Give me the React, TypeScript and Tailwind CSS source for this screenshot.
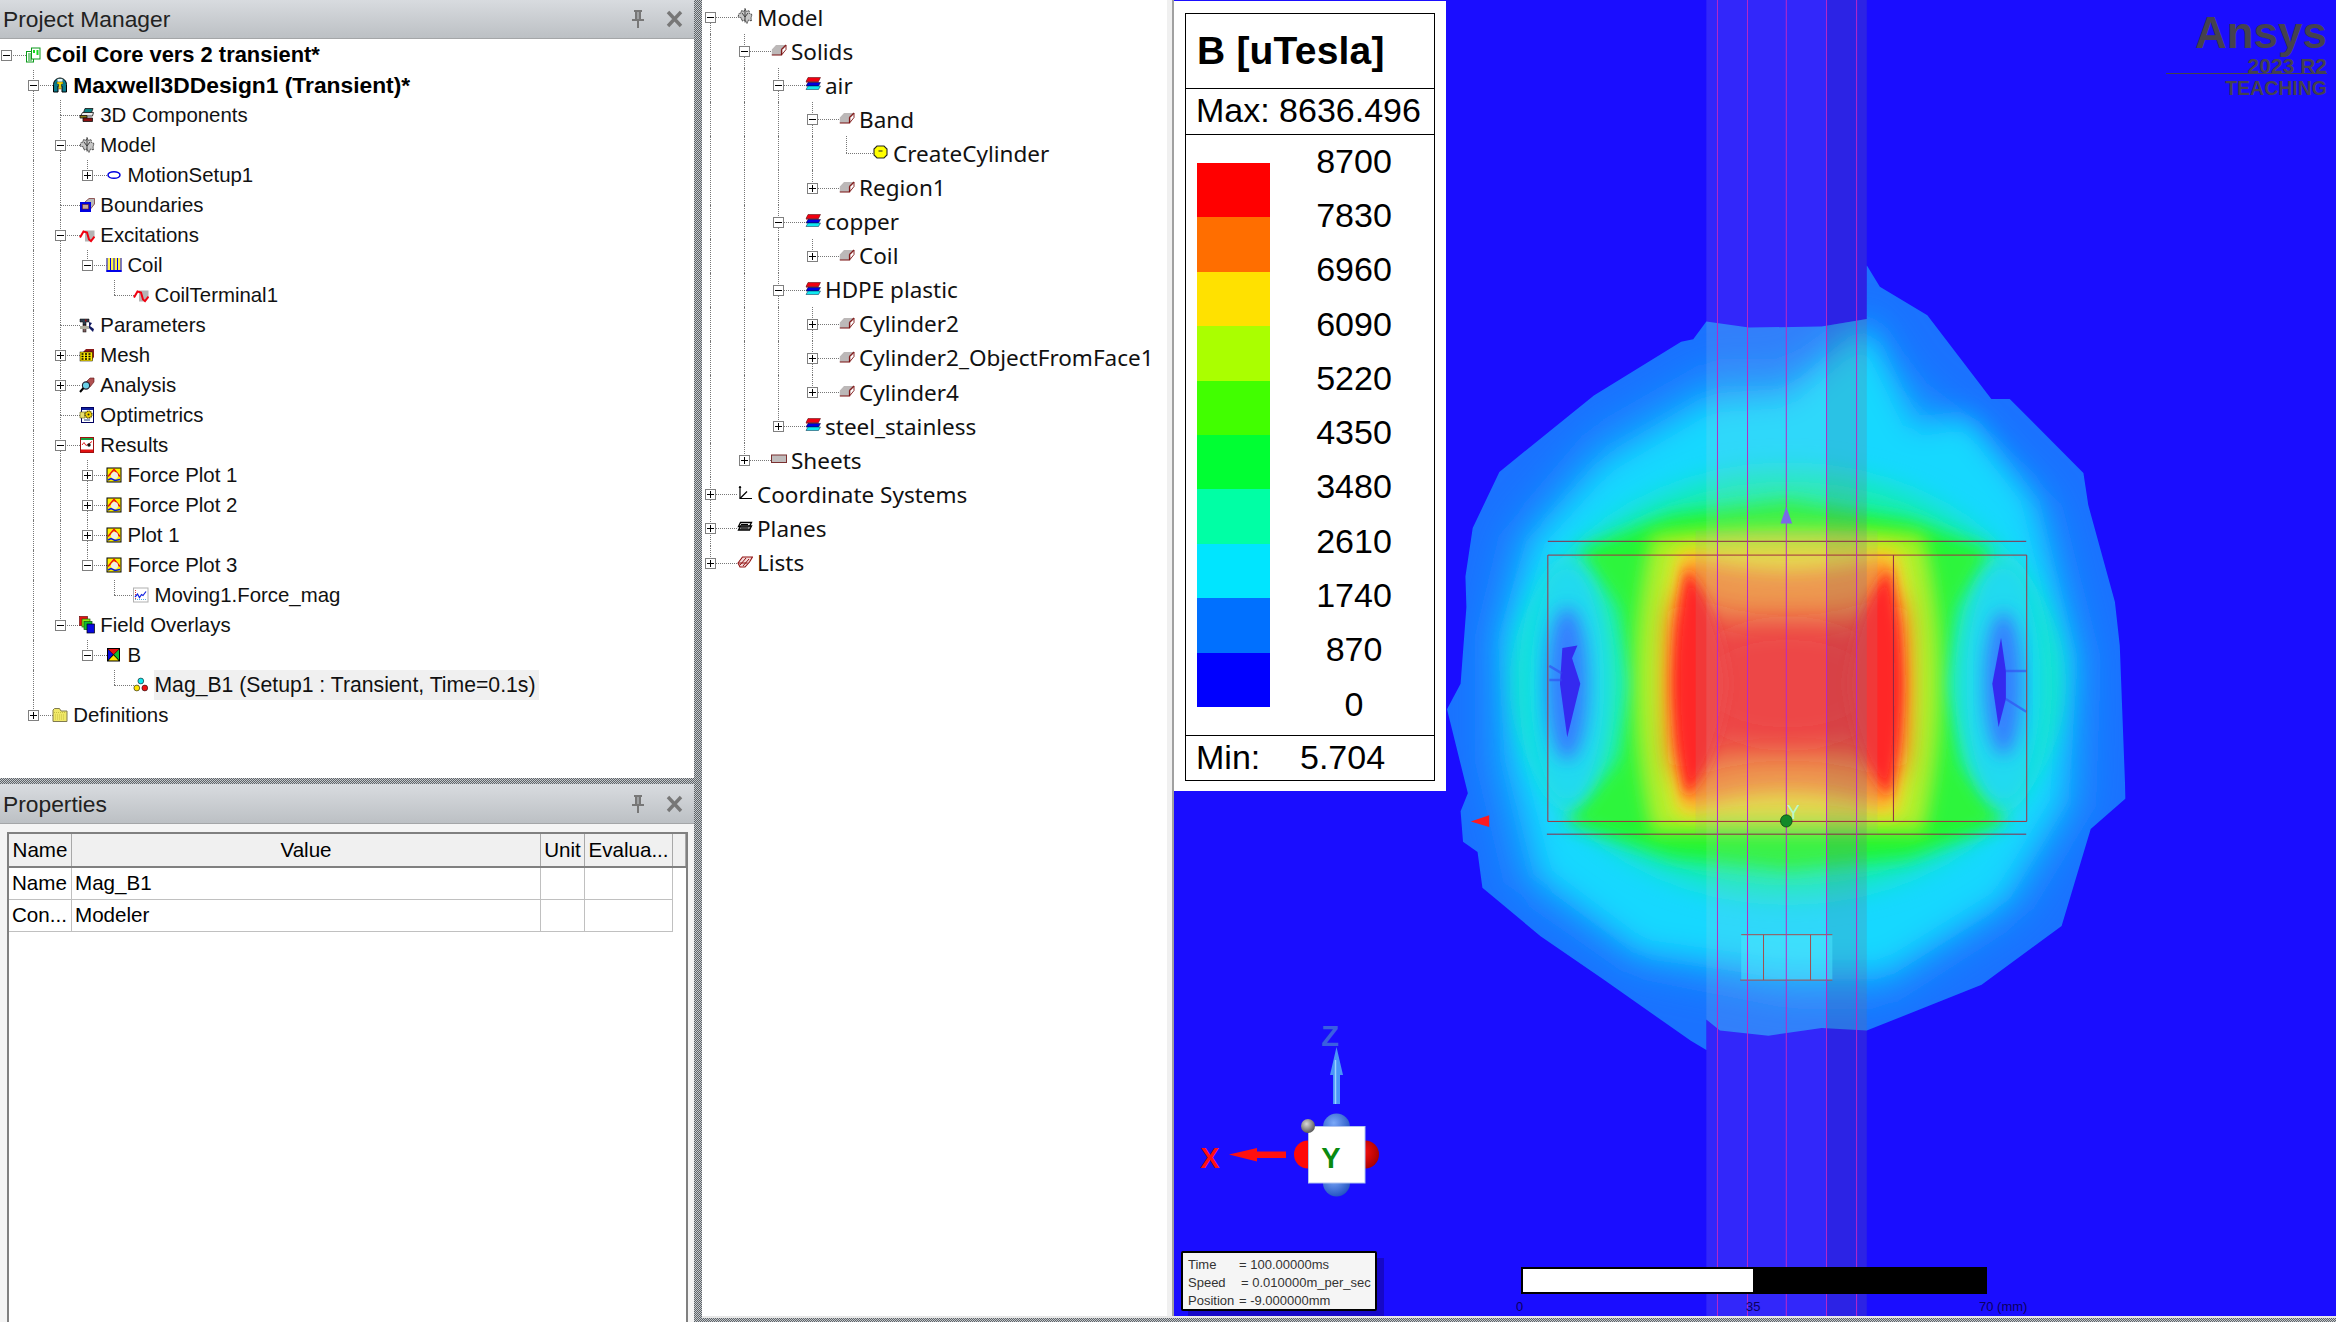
import React from "react";

type N = { t: string; i?: string; b?: boolean; o?: boolean; sel?: boolean; wide?: boolean; c?: N[] };

const leftTree: N[] = [
  { t: "Coil Core vers 2 transient*", i: "project", b: true, o: true, c: [
    { t: "Maxwell3DDesign1 (Transient)*", i: "maxwell", b: true, wide: true, o: true, c: [
      { t: "3D Components", i: "components" },
      { t: "Model", i: "model", o: true, c: [{ t: "MotionSetup1", i: "motion", c: [] , o: false }] },
      { t: "Boundaries", i: "boundaries" },
      { t: "Excitations", i: "excitation", o: true, c: [
        { t: "Coil", i: "coil", o: true, c: [{ t: "CoilTerminal1", i: "excitation" }] },
      ] },
      { t: "Parameters", i: "parameters" },
      { t: "Mesh", i: "mesh", c: [], o: false },
      { t: "Analysis", i: "analysis", c: [], o: false },
      { t: "Optimetrics", i: "optimetrics" },
      { t: "Results", i: "results", o: true, c: [
        { t: "Force Plot 1", i: "plot", c: [], o: false },
        { t: "Force Plot 2", i: "plot", c: [], o: false },
        { t: "Plot 1", i: "plot", c: [], o: false },
        { t: "Force Plot 3", i: "plot", o: true, c: [{ t: "Moving1.Force_mag", i: "chart" }] },
      ] },
      { t: "Field Overlays", i: "overlays", o: true, c: [
        { t: "B", i: "bfield", o: true, c: [{ t: "Mag_B1 (Setup1 : Transient, Time=0.1s)", i: "dots", sel: true }] },
      ] },
    ] },
    { t: "Definitions", i: "folder", c: [], o: false },
  ] },
];

const midTree: N[] = [
  { t: "Model", i: "model", o: true, c: [
    { t: "Solids", i: "solid", o: true, c: [
      { t: "air", i: "material", o: true, c: [
        { t: "Band", i: "solid", o: true, c: [{ t: "CreateCylinder", i: "op" }] },
        { t: "Region1", i: "solid", c: [], o: false },
      ] },
      { t: "copper", i: "material", o: true, c: [{ t: "Coil", i: "solid", c: [], o: false }] },
      { t: "HDPE plastic", i: "material", o: true, c: [
        { t: "Cylinder2", i: "solid", c: [], o: false },
        { t: "Cylinder2_ObjectFromFace1", i: "solid", c: [], o: false },
        { t: "Cylinder4", i: "solid", c: [], o: false },
      ] },
      { t: "steel_stainless", i: "material", c: [], o: false },
    ] },
    { t: "Sheets", i: "sheet", c: [], o: false },
  ] },
  { t: "Coordinate Systems", i: "axes", c: [], o: false },
  { t: "Planes", i: "planes", c: [], o: false },
  { t: "Lists", i: "lists", c: [], o: false },
];

type Row = { n: N; depth: number; cont: boolean[]; first: boolean; last: boolean };
function flatten(nodes: N[], depth = 0, cont: boolean[] = []): Row[] {
  const out: Row[] = [];
  nodes.forEach((n, idx) => {
    const last = idx === nodes.length - 1;
    out.push({ n, depth, cont, first: depth === 0 && idx === 0, last });
    if (n.o && n.c) out.push(...flatten(n.c, depth + 1, [...cont, !last]));
  });
  return out;
}

function Icon({ k }: { k?: string }) {
  const p = { width: 16, height: 16, viewBox: "0 0 16 16", className: "shrink-0" };
  switch (k) {
    case "project":
      return (
        <svg {...p}>
          <rect x="1.5" y="4.5" width="7" height="10.5" fill="#fff" stroke="#0a9a1a" />
          <rect x="6.5" y="1" width="8.5" height="11" fill="#fff" stroke="#0a9a1a" />
          <path d="M3 7h4M3 9h4M3 11h4M3 13h4" stroke="#0a9a1a" />
          <rect x="8" y="3" width="2" height="3" fill="#18d820" />
          <rect x="11.5" y="3" width="2" height="5" fill="#18d820" />
        </svg>
      );
    case "maxwell":
      return (
        <svg {...p}>
          <path d="M1.5 15V7.5a6.5 6.5 0 0 1 13 0V15h-4.5V9H6v6z" fill="#0a7a8a" stroke="#000" />
          <path d="M5.5 1.8h5v3h-5z" fill="#e8f4f8" />
          <path d="M5 5h6v2H9.2v5H6.8V7H5z" fill="#ffe000" stroke="#222" strokeWidth=".4" />
        </svg>
      );
    case "components":
      return (
        <svg {...p}>
          <path d="M6 1.5h8l-1.500 4H4.500z" fill="#0a8080" stroke="#111" strokeWidth=".8" />
          <path d="M3.500 5.500h11l-1 3.500H1.500z" fill="#eee" stroke="#111" strokeWidth=".8" />
          <path d="M1 8.500h7v2.500H1z" fill="#8a7a10" stroke="#111" strokeWidth=".8" />
          <path d="M4 11h9.500v3.500H4z" fill="#8a1010" stroke="#111" strokeWidth=".8" />
        </svg>
      );
    case "model":
      return (
        <svg {...p}>
          <path d="M8 .5l1.500 3L12 2.500l.5 3 2.500 1-1 3.500.5 3-3-1-1.500 3.500-2-3.500-3 1-.5-3L1 9l1-3.500 2-.500.5-2.500 2.500 1z" fill="#c6c6c6" stroke="#333" strokeWidth=".9" strokeDasharray="1.500 .6" />
          <path d="M8 1.500v13M5 5l3 4 3-4" stroke="#333" strokeWidth=".9" fill="none" />
        </svg>
      );
    case "motion":
      return (
        <svg {...p}>
          <ellipse cx="8" cy="8" rx="6" ry="3.300" fill="#fff" stroke="#0000e0" strokeWidth="1.500" />
        </svg>
      );
    case "boundaries":
      return (
        <svg {...p}>
          <path d="M6 5l4-3.500h5.500V7l-4 5H6z" fill="#b8b8b8" stroke="#702020" strokeWidth=".7" />
          <rect x="1" y="5" width="11" height="10" fill="#0000e0" />
          <rect x="3.500" y="7.500" width="6" height="4.500" fill="#c8a898" stroke="#702020" strokeWidth=".6" />
        </svg>
      );
    case "excitation":
      return (
        <svg {...p}>
          <path d="M6 3.500h9.500v7.500l-3.500 3.500H6z" fill="#b4b4b4" />
          <path d="M1 10.500L4.500 4.500l3.500 1 2 7 2 1.500 3.500-4.500" stroke="#f00010" strokeWidth="2" fill="none" />
        </svg>
      );
    case "coil":
      return (
        <svg {...p}>
          <rect x="0.500" y="1" width="15" height="13" fill="#fff24a" />
          <path d="M1 1v14M4.500 1v14M8 1v14M11.500 1v14M15 1v14" stroke="#0000e8" strokeWidth="1" />
          <rect x="0.500" y="13" width="15" height="2" fill="#0000e8" />
        </svg>
      );
    case "parameters":
      return (
        <svg {...p}>
          <path d="M1 2h9v3H7v3H4V5H1z" fill="#304050" stroke="#000" strokeWidth=".5" />
          <rect x="4" y="8" width="3" height="7" fill="#806060" stroke="#000" strokeWidth=".5" />
          <rect x="1" y="9" width="9" height="3" fill="#b0b0a0" />
          <path d="M10 5l3 1-2 3 4 3-1 3-4-4z" fill="#101860" />
          <rect x="6" y="2.500" width="1.500" height="2" fill="#a01010" />
        </svg>
      );
    case "mesh":
      return (
        <svg {...p}>
          <path d="M4 5l3-3h8v8l-2 3z" fill="#8a1a1a" />
          <rect x="1" y="5" width="12.500" height="9" fill="#ffe800" stroke="#000" strokeWidth=".5" />
          <path d="M2.500 7h2M6 7h2M9.500 7h2M2.500 9.500h2M6 9.500h2M9.500 9.500h2M2.500 12h2M6 12h2M9.500 12h2" stroke="#000" strokeWidth="1.300" />
        </svg>
      );
    case "analysis":
      return (
        <svg {...p}>
          <path d="M7 5l4-4h4v4l-4 5H9z" fill="#b05050" stroke="#601010" strokeWidth=".6" />
          <circle cx="7" cy="8.500" r="3.600" fill="#6ad0e8" stroke="#223" strokeWidth="1.100" />
          <path d="M4.500 11L1 15" stroke="#000" strokeWidth="2" />
        </svg>
      );
    case "optimetrics":
      return (
        <svg {...p}>
          <rect x="2.500" y="0.500" width="12" height="15" fill="#fff" stroke="#000060" />
          <rect x="3" y="1" width="11" height="2" fill="#1020a0" />
          <path d="M1 5h5v6H1z" fill="#e8e070" stroke="#605810" strokeWidth=".6" />
          <circle cx="9.500" cy="7.500" r="3.500" fill="#f0d000" stroke="#403800" strokeWidth="1.300" strokeDasharray="1.200 .6" />
          <circle cx="9.500" cy="7.500" r="1" fill="#222" />
          <path d="M5 13h6" stroke="#204080" />
        </svg>
      );
    case "results":
      return (
        <svg {...p}>
          <rect x="1.500" y="0.500" width="13" height="15" fill="#fff" stroke="#a01010" />
          <rect x="2" y="1" width="12" height="2" fill="#18a040" />
          <path d="M3 8l2-2.500 2 3 2-1 4-3" fill="none" stroke="#e02020" />
          <circle cx="10" cy="8" r="1.700" fill="#111" />
          <rect x="2" y="12.500" width="12" height="2.500" fill="#e01010" />
        </svg>
      );
    case "plot":
      return (
        <svg {...p}>
          <rect x="1" y="1" width="14" height="14" fill="#fff000" stroke="#000" />
          <path d="M2 9.500L8 2.500 14 9.500" fill="none" stroke="#ee1010" strokeWidth="1.500" />
          <circle cx="8.500" cy="8.500" r="3.500" fill="#f0f0e4" />
          <path d="M2 13l3-1.500 4 2 5-1" fill="none" stroke="#0818e0" strokeWidth="1.400" />
        </svg>
      );
    case "chart":
      return (
        <svg {...p}>
          <rect x="0.500" y="1" width="14.500" height="14" fill="#fff" stroke="#b0b0b0" />
          <path d="M2.500 3v10" stroke="#e04040" strokeDasharray="1 1" />
          <path d="M2 10l2.500-3 2 3.500 2-3 1.500 1 3-4" fill="none" stroke="#1020e0" strokeWidth="1.200" />
          <path d="M2 12.500h11.500" stroke="#60b0e0" strokeDasharray="1 1" />
        </svg>
      );
    case "overlays":
      return (
        <svg {...p} viewBox="0 0 16 18" height={18}>
          <rect x="0.500" y="0.500" width="8" height="9" fill="#e81010" stroke="#701010" strokeWidth=".7" />
          <rect x="3" y="3" width="8" height="8" fill="#90f010" stroke="#206010" strokeWidth=".7" />
          <rect x="5" y="5.500" width="8" height="8" fill="#10c030" stroke="#105010" strokeWidth=".7" />
          <rect x="8" y="8" width="7.500" height="9" fill="#0808e0" stroke="#000" strokeWidth=".7" />
        </svg>
      );
    case "bfield":
      return (
        <svg {...p}>
          <rect x="1" y="1" width="13" height="13.500" fill="#000" />
          <path d="M2 2h11L7.500 7.500z" fill="#e81010" />
          <path d="M2 2.500v10.500l5-5.500z" fill="#0808e0" />
          <path d="M13 2.500v10.500l-5-5.500z" fill="#10c030" />
          <path d="M2.500 13.500h10L7.500 8.200z" fill="#ffe600" />
        </svg>
      );
    case "dots":
      return (
        <svg {...p}>
          <circle cx="7.800" cy="4" r="2.900" fill="#10e8f0" stroke="#111" strokeWidth=".6" />
          <circle cx="3.800" cy="11" r="2.900" fill="#ffe600" stroke="#111" strokeWidth=".6" />
          <circle cx="11.800" cy="11" r="2.900" fill="#f01010" stroke="#111" strokeWidth=".6" />
        </svg>
      );
    case "folder":
      return (
        <svg {...p}>
          <path d="M1 14.500V3l1.500-1.500h5L9 4h6v10.500z" fill="#f0e868" stroke="#807a50" />
          <path d="M2 5.500h12M3 8h10M3 10h10M3 12h10" stroke="#c8c040" strokeDasharray="1 1" />
        </svg>
      );
    case "solid":
      return (
        <svg {...p} viewBox="0 0 16 12" height={12}>
          <path d="M.8 5.500L5 1h10L10.500 5.500v5.500H.8z" fill="#bcb8b8" />
          <path d="M15 1l-4.500 4.500M10.500 5.500v5.500H.8" fill="none" stroke="#7a1010" strokeWidth="1.200" />
          <path d="M10.800 5.800L15 1.500v4l-4 5z" fill="#fff" stroke="#7a1010" strokeWidth=".9" />
        </svg>
      );
    case "material":
      return (
        <svg {...p}>
          <path d="M3 1.500h12.500l-2 4H1z" fill="#f00010" stroke="#400" strokeWidth=".5" />
          <path d="M1 5.500h12.500v1H1z" fill="#a00010" />
          <path d="M3 6.500h12.500l-2 3.500H1z" fill="#0000e0" stroke="#002" strokeWidth=".5" />
          <path d="M3 10h12.500l-2 3.500H1z" fill="#10e8f0" stroke="#024" strokeWidth=".5" />
        </svg>
      );
    case "op":
      return (
        <svg {...p}>
          <path d="M4 2h7l3 3v6l-3 3H4l-3-3V5z" fill="#ffff00" stroke="#222" strokeWidth="1.100" />
          <path d="M5.500 7h4" stroke="#222" />
        </svg>
      );
    case "sheet":
      return (
        <svg {...p} viewBox="0 0 16 10" height={10}>
          <rect x="0.500" y="1" width="15" height="7.500" fill="#c0bcbc" stroke="#7a3030" />
        </svg>
      );
    case "axes":
      return (
        <svg {...p}>
          <path d="M3 1v12.500h12" fill="none" stroke="#000" strokeWidth="1.200" />
          <path d="M3 13.500l7-7" stroke="#000" strokeWidth="1.200" />
          <path d="M3 1l-1.500 2h3z" fill="#000" />
        </svg>
      );
    case "planes":
      return (
        <svg {...p}>
          <path d="M3.500 3.500h11l-2 4h-11z" fill="#fff" stroke="#000" strokeWidth="1.300" />
          <path d="M3.500 7h11l-2 4h-11z" fill="#888" stroke="#000" strokeWidth="1.300" />
          <path d="M4 5.500h7M4 9h7" stroke="#000" />
        </svg>
      );
    case "lists":
      return (
        <svg {...p}>
          <path d="M1 9l4.500-6h10l-3 5-4.500 5H3z" fill="#f4d8d8" stroke="#901010" strokeWidth="1.100" />
          <path d="M3 11l6-7M6 12l6-7M1.500 9h9" stroke="#901010" />
        </svg>
      );
    default:
      return <svg {...p} />;
  }
}

function Expander({ open }: { open: boolean }) {
  return (
    <span className="relative block w-[11px] h-[11px] border border-[#808080] bg-white">
      <span className="absolute left-[1px] right-[1px] top-[4px] h-[1px] bg-black" />
      {!open && <span className="absolute top-[1px] bottom-[1px] left-[4px] w-[1px] bg-black" />}
    </span>
  );
}

function Tree({ nodes, kind }: { nodes: N[]; kind: "left" | "mid" }) {
  const rows = flatten(nodes);
  const left = kind === "left";
  const cellW = left ? "w-[27.100px]" : "w-[34px]";
  const rowH = left ? "h-[30px]" : "h-[34.100px]";
  const lineX = left ? "left-[6px]" : "left-[8px]";
  const hLine = left ? "left-[6px] w-[20px]" : "left-[8px] w-[27px]";
  const box = left ? "left-[1px]" : "left-[3px]";
  return (
    <div className={left ? "pt-[40px]" : "pt-0"}>
      {rows.map((r, i) => {
        const hasKids = r.n.c !== undefined;
        return (
          <div key={i} className={`flex items-center ${rowH}`}>
            {r.cont.map((c, k) => (
              <div key={k} className={`relative self-stretch shrink-0 ${cellW}`}>
                {c && <span className={`absolute top-0 bottom-0 border-l border-dotted border-[#777] ${lineX}`} />}
              </div>
            ))}
            <div className={`relative self-stretch shrink-0 ${cellW}`}>
              {!r.first && <span className={`absolute top-0 h-1/2 border-l border-dotted border-[#777] ${lineX}`} />}
              {!r.last && <span className={`absolute top-1/2 bottom-0 border-l border-dotted border-[#777] ${lineX}`} />}
              <span className={`absolute top-1/2 border-t border-dotted border-[#777] ${hLine}`} />
              {hasKids && (
                <span className={`absolute top-[calc(50%-5px)] ${box}`}>
                  <Expander open={!!r.n.o} />
                </span>
              )}
            </div>
            <span className={`relative flex items-center justify-center w-[16px] ${left ? "-ml-[2px]" : "ml-[1px] -mt-[2px]"}`}>
              <Icon k={r.n.i} />
            </span>
            <span
              className={`whitespace-nowrap ${left ? "ml-[5px] leading-[30px]" : "ml-[4px] mt-[1px] leading-[34px]"} ${
                left
                  ? r.n.b
                    ? `font-bold text-black font-['Liberation_Sans',sans-serif] ${r.n.wide ? "text-[22.800px]" : "text-[21.900px]"}`
                    : `text-[#111] font-['Liberation_Sans',sans-serif] ${r.n.sel ? "text-[21.200px]" : "text-[20.400px]"}`
                  : "text-[22.500px] text-[#111] font-['Noto_Sans',sans-serif]"
              } ${r.n.sel ? "bg-[#f0f0f0] pr-[4px]" : ""}`}
            >
              {r.n.t}
            </span>
          </div>
        );
      })}
    </div>
  );
}

function PanelHeader({ title }: { title: string }) {
  return (
    <div className="flex items-center justify-between h-[39px] shrink-0 pl-[3px] pr-[11px] bg-gradient-to-b from-[#d8dbdf] to-[#bcc0c4] border-b border-[#a4a6a8]">
      <span className="text-[22.800px] text-[#222] font-['Liberation_Sans',sans-serif]">{title}</span>
      <div className="flex items-center gap-[21px]">
        <svg width="14" height="20" viewBox="0 0 14 20">
          <path d="M3 1h8v2h-1v7h3v2H8v7H6v-7H1v-2h3V3H3z" fill="#777" />
          <path d="M6.500 3v7h1V3z" fill="#c8ccd0" />
        </svg>
        <svg width="17" height="18" viewBox="0 0 17 18">
          <path d="M2 2l13 14M15 2L2 16" stroke="#777" strokeWidth="3.400" />
        </svg>
      </div>
    </div>
  );
}

const pattern = "bg-[repeating-conic-gradient(#5f6468_0_25%,#c4c8cc_0_50%)] bg-[length:2px_2px]";

function PropTable() {
  const cols = ["w-[63px]", "w-[469px]", "w-[44px]", "w-[88px]", "w-[13px]"];
  const head = ["Name", "Value", "Unit", "Evalua..."];
  const rows = [["Name", "Mag_B1"], ["Con...", "Modeler"]];
  return (
    <div className="text-[20.600px] text-black font-['Liberation_Sans',sans-serif]">
      <div className="flex h-[34px] bg-[#f0f0f0] border-b-2 border-[#808080]">
        {cols.map((c, i) => (
          <div key={i} className={`${c} border-r border-[#a8a8a8] flex items-center justify-center overflow-hidden whitespace-nowrap`}>
            {head[i] ?? ""}
          </div>
        ))}
      </div>
      {rows.map((r, ri) => (
        <div key={ri} className="flex h-[32px] w-[664px] border-b border-[#c0c0c0]">
          {cols.slice(0, 4).map((c, i) => (
            <div key={i} className={`${c} border-r border-[#c0c0c0] flex items-center pl-[3px] pb-[1px] whitespace-nowrap overflow-hidden`}>
              {r[i] ?? ""}
            </div>
          ))}
        </div>
      ))}
    </div>
  );
}

const legendColors = ["bg-[#ff0000]", "bg-[#ff6e00]", "bg-[#ffe100]", "bg-[#aaff00]", "bg-[#41ff00]", "bg-[#00ff33]", "bg-[#00ffa5]", "bg-[#00e5ff]", "bg-[#0070ff]", "bg-[#0000ff]"];
const legendVals = ["8700", "7830", "6960", "6090", "5220", "4350", "3480", "2610", "1740", "870", "0"];

function Legend() {
  return (
    <div className="absolute left-0 top-[1px] w-[272px] h-[790px] bg-white pl-[11px] pt-[12px] font-['Liberation_Sans',sans-serif] text-black">
      <div className="w-[250px] h-[768px] border border-black flex flex-col">
        <div className="h-[75px] shrink-0 flex items-center pl-[11px] font-bold text-[39px] tracking-[0.2px] border-b border-black">B [uTesla]</div>
        <div className="h-[46px] shrink-0 flex items-center pl-[10px] pb-[3px] text-[34px] leading-none border-b border-black whitespace-nowrap">Max: 8636.496</div>
        <div className="h-[601px] shrink-0 flex border-b border-black">
          <div className="ml-[11px] mt-[28px] w-[73px] flex flex-col">
            {legendColors.map((c) => (
              <div key={c} className={`h-[54.400px] ${c}`} />
            ))}
          </div>
          <div className="ml-[4px] w-[160px] flex flex-col -mt-[1.500px]">
            {legendVals.map((v) => (
              <div key={v} className="h-[54.300px] shrink-0 flex items-center justify-center text-[34px] leading-none">{v}</div>
            ))}
          </div>
        </div>
        <div className="flex-1 min-h-0 flex items-center pl-[10px] pb-[2px] text-[34px] leading-none whitespace-nowrap">
          <span className="w-[104px]">Min:</span>
          <span>5.704</span>
        </div>
      </div>
    </div>
  );
}

function Field() {
  const outer =
    "963,30 990,72 1088,128 1220,292 1258,292 1410,437 1420,500 1475,690 1485,775 1497,1075 1425,1135 1365,1325 1200,1440 963,1530 870,1525 760,1540 660,1530 632,1508 632,1568 600,1550 420,1430 290,1345 170,1250 160,1180 130,1160 125,1100 140,1065 97,900 125,850 137,700 135,640 150,545 205,435 400,285 580,180 605,175 632,140 720,152 870,150 963,135";
  return (
    <svg className="absolute left-0 top-0" width="1162" height="1322" viewBox="1174 0 1162 1322">
      <defs>
        <clipPath id="outerClip"><polygon points={outer} /></clipPath>
        <filter id="b40" x="-20%" y="-20%" width="140%" height="140%"><feGaussianBlur stdDeviation="40" /></filter>
        <filter id="b30" x="-20%" y="-20%" width="140%" height="140%"><feGaussianBlur stdDeviation="28" /></filter>
        <filter id="b18" x="-30%" y="-30%" width="160%" height="160%"><feGaussianBlur stdDeviation="18" /></filter>
        <filter id="b10" x="-40%" y="-30%" width="180%" height="160%"><feGaussianBlur stdDeviation="12" /></filter>
        <filter id="b32" x="-40%" y="-40%" width="180%" height="180%"><feGaussianBlur stdDeviation="34" /></filter>
      </defs>
      <g transform="translate(1400,250) scale(0.4847,0.5102)">
        <g clipPath="url(#outerClip)">
          <rect x="0" y="0" width="1568" height="1568" fill="#1a72ff" />
          <polygon filter="url(#b40)" fill="#14a0ff" points="963,130 1060,270 1200,370 1340,500 1420,800 1410,1090 1280,1290 1000,1460 800,1460 480,1400 240,1240 180,1000 180,760 230,560 400,370 640,240 800,240" />
          <polygon filter="url(#b30)" fill="#12d8ff" points="963,160 1060,350 1170,330 1300,490 1380,800 1360,1080 1240,1270 1000,1410 800,1410 500,1370 295,1225 235,1000 220,760 280,570 425,420 640,300 800,290" />
          <ellipse filter="url(#b30)" fill="#14eeb0" cx="800" cy="850" rx="555" ry="415" />
          <polygon filter="url(#b18)" fill="#20f530" points="800,490 1050,530 1220,590 1150,700 1120,850 1160,1010 1250,1120 1050,1190 800,1215 560,1190 340,1120 450,1000 480,850 450,700 370,590 560,520" />
          <ellipse filter="url(#b18)" fill="#18d8f0" cx="345" cy="850" rx="88" ry="240" />
          <ellipse filter="url(#b18)" fill="#18d8f0" cx="1245" cy="850" rx="88" ry="240" />
          <ellipse filter="url(#b18)" fill="#2a78ff" cx="345" cy="850" rx="42" ry="150" />
          <ellipse filter="url(#b18)" fill="#2a78ff" cx="1245" cy="850" rx="38" ry="140" />
          <polygon fill="#2a1ff0" points="335,780 366,775 355,800 372,850 345,955 330,850" />
          <path d="M308 815L334 830M308 843H334" stroke="#2a40f0" strokeWidth="5" opacity=".6" />
          <polygon fill="#2a1ff0" points="1240,760 1250,825 1250,880 1235,935 1222,850" />
          <path d="M1250 825H1292M1250 880L1292 905" stroke="#2a40f0" strokeWidth="5" opacity=".6" />
          <path filter="url(#b18)" fill="#a8f020" d="M520 560 Q450 850 520 1140 L1080 1140 Q1150 850 1080 560 Q800 530 520 560 Z" />
          <path filter="url(#b18)" fill="#f5e020" d="M570 585 Q505 850 570 1110 L1030 1110 Q1095 850 1030 585 Q800 570 570 585 Z" />
          <path filter="url(#b18)" fill="#ff8a20" d="M590 600 Q535 850 590 1095 Q800 1030 1010 1095 Q1065 850 1010 600 Q800 660 590 600 Z" />
          <path filter="url(#b32)" fill="#ff1212" d="M575 690 Q800 790 1025 690 L1025 1020 Q800 935 575 1020 Z" />
          <ellipse filter="url(#b32)" fill="#ff1212" cx="800" cy="850" rx="200" ry="110" />
          <path filter="url(#b10)" fill="#ff1a1a" d="M590 625 Q545 850 590 1070 Q660 1000 680 850 Q660 700 590 625 Z" />
          <path filter="url(#b10)" fill="#ff1a1a" d="M1010 625 Q1055 850 1010 1070 Q940 1000 920 850 Q940 700 1010 625 Z" />
          <rect x="305" y="598" width="988" height="522" fill="#ffffff" opacity=".05" />
        </g>
        <rect x="632" y="-500" width="331" height="2600" fill="#d8d8d8" opacity=".13" />
        <rect x="880" y="-500" width="83" height="2600" fill="#000030" opacity=".1" />
        <rect x="610" y="550" width="375" height="595" fill="#a0a0a0" opacity=".14" />
        <rect x="704" y="1342" width="188" height="89" fill="#50e8ff" opacity=".45" />
        <g fill="none" stroke="#8a2a48" strokeWidth="1">
          <path d="M305 571H1292M303 1145H1292M1018 598V1120" vectorEffect="non-scaling-stroke" />
          <rect x="305" y="598" width="988" height="522" stroke="#a03040" vectorEffect="non-scaling-stroke" />
          <path d="M704 1342H892M702 1431H892M750 1342V1431M847 1342V1431" stroke="#a05050" vectorEffect="non-scaling-stroke" />
        </g>
        <path d="M655 -500V2100M717 -500V2100M797 -500V2100M880 -500V2100M942 -500V2100" stroke="#b828c8" strokeWidth="1" vectorEffect="non-scaling-stroke" fill="none" />
        <polygon points="797,503 809,536 785,536" fill="#7a6ae8" />
        <polygon points="146,1120 184,1108 184,1131" fill="#ff1a20" />
        <circle cx="797" cy="1119" r="12" fill="#128a28" stroke="#064010" strokeWidth="1.500" />
        <text x="812" y="1115" fontSize="40" fontFamily="Liberation Sans" fill="#b8f8c8" textAnchor="middle">Y</text>
      </g>
      {/* triad */}
      <defs>
        <radialGradient id="blueSph" cx=".4" cy=".35" r=".7"><stop offset="0" stopColor="#7aa8f8" /><stop offset="1" stopColor="#2050c0" /></radialGradient>
        <radialGradient id="redSph" cx=".4" cy=".4" r=".7"><stop offset="0" stopColor="#ff1010" /><stop offset="1" stopColor="#a00000" /></radialGradient>
        <radialGradient id="graySph" cx=".4" cy=".35" r=".7"><stop offset="0" stopColor="#d8d8d8" /><stop offset="1" stopColor="#505050" /></radialGradient>
      </defs>
      <circle cx="1336.500" cy="1127" r="13.500" fill="url(#blueSph)" />
      <circle cx="1336.500" cy="1183" r="13.500" fill="url(#blueSph)" />
      <circle cx="1308" cy="1154.500" r="14" fill="#ff0808" />
      <circle cx="1365" cy="1154.500" r="14" fill="url(#redSph)" />
      <rect x="1308.500" y="1126.500" width="56.500" height="56.500" fill="#fff" stroke="#b0c4f0" />
      <circle cx="1308" cy="1126" r="7" fill="url(#graySph)" />
      <text x="1331" y="1168" fontSize="29" fontWeight="700" fontFamily="Liberation Sans" fill="#0a8a10" textAnchor="middle">Y</text>
      <text x="1210" y="1168" fontSize="29" fontWeight="700" fontFamily="Liberation Sans" fill="#ff1010" textAnchor="middle">X</text>
      <text x="1330" y="1046" fontSize="29" fontWeight="700" fontFamily="Liberation Sans" fill="#3a5fe0" textAnchor="middle">Z</text>
      <path d="M1229 1154.500l28-6.500v3.500h29v6.500h-29v3.500z" fill="#ff1010" />
      <path d="M1336.500 1047l6.500 28h-3v29h-7v-29h-3z" fill="#4a96f8" />
      <path d="M1335.500 1060v44" stroke="#9ad0ff" strokeWidth="1.500" />
    </svg>
  );
}

function InfoBox() {
  const lines = [
    ["Time", "= 100.00000ms", "w-[51px]"],
    ["Speed", "= 0.010000m_per_sec", "w-[53px]"],
    ["Position", "= -9.000000mm", "w-[51px]"],
  ];
  return (
    <>
      <div className="absolute left-[14px] top-[1258px] w-[196px] h-[58px] bg-[#1608c8]" />
      <div className="absolute left-[7px] top-[1251px] w-[196px] h-[60px] bg-[#f5f5f5] border-2 border-black rounded-[2px] pl-[5px] pt-[3px] text-[13px] leading-[18px] text-[#333] font-['Liberation_Sans',sans-serif]">
        {lines.map(([a, b, w]) => (
          <div key={a} className="flex whitespace-nowrap">
            <span className={w}>{a}</span>
            <span>{b}</span>
          </div>
        ))}
      </div>
    </>
  );
}

function ScaleBar() {
  return (
    <div className="absolute left-[347px] top-[1267px] w-[466px] h-[27px] flex">
      <div className="w-[234px] bg-white border-2 border-black" />
      <div className="flex-1 bg-black" />
      <span className="absolute left-[-5px] top-[31px] text-[13px] leading-[17px] text-[#0c0060] font-['Liberation_Sans',sans-serif]">0</span>
      <span className="absolute left-[225px] top-[31px] text-[13px] leading-[17px] text-[#0c0060] font-['Liberation_Sans',sans-serif]">35</span>
      <span className="absolute left-[458px] top-[31px] text-[13px] leading-[17px] text-[#0c0060] whitespace-nowrap font-['Liberation_Sans',sans-serif]">70 (mm)</span>
    </div>
  );
}

function Watermark() {
  return (
    <div className="absolute right-[9px] top-[8px] w-[161px] flex flex-col items-end text-[#45424e] font-bold font-['Liberation_Sans',sans-serif]">
      <div className="text-[44px] leading-[50px] whitespace-nowrap">Ansys</div>
      <div className="text-[21px] leading-[15px] whitespace-nowrap border-b border-[#45424e] w-full text-right">2023 R2</div>
      <div className="text-[19.500px] leading-[22px] mt-[3px] whitespace-nowrap">TEACHING</div>
    </div>
  );
}

export default function App() {
  return (
    <div className="flex w-[2336px] h-[1322px] overflow-hidden bg-white">
      <div className="w-[694px] h-full shrink-0 flex flex-col">
        <div className="relative h-[778px] shrink-0 bg-white">
          <div className="absolute left-0 top-0 w-full"><PanelHeader title="Project Manager" /></div>
          <Tree nodes={leftTree} kind="left" />
        </div>
        <div className={`h-[6px] shrink-0 ${pattern}`} />
        <div className="flex-1 flex flex-col min-h-0 bg-white">
          <div className="pt-[1px] bg-[#d8dbdf]"><PanelHeader title="Properties" /></div>
          <div className="flex-1 flex flex-col pt-[8px] pl-[7px] pr-[6px] bg-[#f4f4f4] min-h-0">
            <div className="flex-1 border-t-2 border-l-2 border-r-2 border-[#808080] bg-white min-h-0">
              <PropTable />
            </div>
          </div>
        </div>
      </div>
      <div className={`w-[8px] h-full shrink-0 ${pattern}`} />
      <div className="flex-1 flex flex-col min-w-0">
        <div className="flex-1 flex min-h-0">
          <div className="w-[465px] shrink-0 bg-white">
            <Tree nodes={midTree} kind="mid" />
          </div>
          <div className="w-[5px] shrink-0 bg-[#f0f0f0]" />
          <div className="w-[2px] shrink-0 bg-[#a0a0a0]" />
          <div className="relative flex-1 bg-[#1a0dff] overflow-hidden">
            <Field />
            <Legend />
            <InfoBox />
            <ScaleBar />
            <Watermark />
          </div>
        </div>
        <div className="h-[2px] shrink-0 bg-[#e8e8e8]" />
        <div className={`h-[4px] shrink-0 ${pattern}`} />
      </div>
    </div>
  );
}
